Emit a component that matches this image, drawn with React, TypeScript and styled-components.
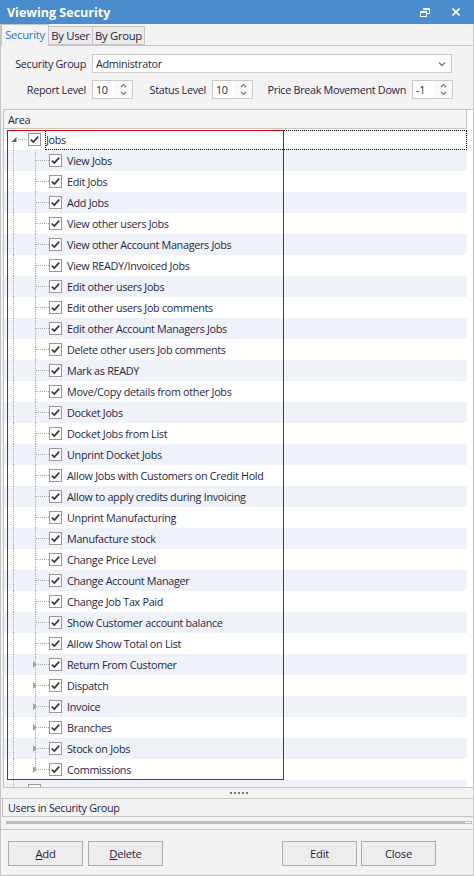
import React from 'react';
import styled, { createGlobalStyle } from 'styled-components';

const FONT = `"Open Sans", "Noto Sans", "DejaVu Sans", sans-serif`;
const TEXT = '#1f1f45';
const LINE = '#c4c4c4';

const Global = createGlobalStyle`
  html, body { margin: 0; padding: 0; background: #ffffff; }
  body { font-family: ${FONT}; }
  * { box-sizing: border-box; }
`;

const Window = styled.div`
  position: relative;
  width: 474px;
  height: 876px;
  display: flex;
  flex-direction: column;
  background: #f3f3f3;
  font-family: ${FONT};
  font-size: 10.8px;
  letter-spacing: -0.3px;
  color: ${TEXT};
  overflow: hidden;
`;

const TitleBar = styled.div`
  height: 24px;
  flex: none;
  background: #4a8ccc;
  display: flex;
  align-items: center;
  padding: 0 14px 0 7px;
`;

const Title = styled.div`
  flex: 1;
  color: #ffffff;
  font-weight: 700;
  font-size: 12.5px;
  letter-spacing: 0;
`;

const TitleButtons = styled.div`
  display: flex;
  align-items: center;
  gap: 22px;
`;

const Body = styled.div`
  flex: 1;
  display: flex;
  flex-direction: column;
  border-left: 1px solid ${LINE};
  border-right: 1px solid ${LINE};
  border-bottom: 1px solid ${LINE};
  min-height: 0;
`;

const TabStrip = styled.div`
  height: 22px;
  flex: none;
  display: flex;
  align-items: flex-end;
  border-bottom: 1px solid ${LINE};
`;

const Tab = styled.div<{ $active?: boolean; $w: number }>`
  width: ${p => p.$w}px;
  height: ${p => (p.$active ? 22 : 19)}px;
  margin-bottom: ${p => (p.$active ? -1 : 0)}px;
  margin-left: ${p => (p.$active ? 0 : -1)}px;
  border: 1px solid ${LINE};
  border-bottom: ${p => (p.$active ? 'none' : `1px solid ${LINE}`)};
  background: ${p => (p.$active ? '#f3f3f3' : '#ebebeb')};
  color: ${p => (p.$active ? '#2a78c2' : TEXT)};
  display: flex;
  align-items: center;
  justify-content: center;
  font-size: 11.3px;
  padding-bottom: ${p => (p.$active ? 2 : 0)}px;
  &:first-child { margin-left: 0; }
`;

const Form = styled.div`
  height: 63px;
  flex: none;
  display: flex;
  flex-direction: column;
  gap: 7px;
  padding-top: 8px;
`;

const FormRow = styled.div`
  display: flex;
  align-items: center;
  height: 19px;
`;

const FieldLabel = styled.div<{ $w: number }>`
  width: ${p => p.$w}px;
  flex: none;
  text-align: right;
  padding-right: 1px;
  margin-right: 5px;
  white-space: nowrap;
`;

const Combo = styled.div`
  width: 360px;
  height: 19px;
  background: #ffffff;
  border: 1px solid #c9c9c9;
  display: flex;
  align-items: center;
  padding: 0 5px 0 3px;
`;

const ComboText = styled.div`
  flex: 1;
`;

const Spin = styled.div`
  width: 41px;
  height: 19px;
  flex: none;
  background: #ffffff;
  border: 1px solid #c9c9c9;
  display: flex;
  align-items: center;
`;

const SpinText = styled.div`
  flex: 1;
  padding-left: 3px;
`;

const SpinButtons = styled.div`
  width: 18px;
  height: 100%;
  background: #f9f9f9;
  display: flex;
  align-items: center;
  justify-content: center;
`;

const Grid = styled.div`
  flex: 1;
  min-height: 0;
  margin-left: 2px;
  display: flex;
  background: #ffffff;
  border-left: 1px solid ${LINE};
  border-top: 1px solid ${LINE};
  border-bottom: 1px solid ${LINE};
`;

const GridMain = styled.div`
  flex: 1;
  min-width: 0;
  display: flex;
  flex-direction: column;
`;

const GridSideStrip = styled.div`
  width: 6px;
  flex: none;
  background: #ffffff;
`;

const GridHeader = styled.div`
  height: 19px;
  flex: none;
  background: #f4f4f4;
  border-bottom: 1px solid #c8c8c8;
  border-right: 1px solid #c8c8c8;
  display: flex;
  align-items: center;
  padding-left: 4px;
`;

const Viewport = styled.div`
  flex: 1;
  min-height: 0;
  overflow: hidden;
`;

const Row = styled.div<{ $alt: boolean }>`
  height: 21px;
  display: flex;
  align-items: center;
  background: ${p => (p.$alt ? '#eff3f9' : '#ffffff')};
`;

const Check = styled.div`
  width: 13px;
  height: 13px;
  flex: none;
  border: 1px solid #999999;
  background: #ffffff;
  display: flex;
  align-items: center;
  justify-content: center;
`;

const NodeLabel = styled.div<{ $focus?: boolean }>`
  flex: 1;
  height: 20px;
  margin-left: 4px;
  display: flex;
  align-items: center;
  border: 1px ${p => (p.$focus ? 'dotted #000000' : 'solid transparent')};
  white-space: nowrap;
`;

const Splitter = styled.div`
  height: 11px;
  flex: none;
  border-bottom: 1px solid ${LINE};
  display: flex;
  align-items: center;
  justify-content: center;
  gap: 2px;
  padding-left: 4px;
`;

const Dot = styled.span`
  width: 2px;
  height: 2px;
  background: #767676;
`;

const UsersHeader = styled.div`
  height: 18px;
  flex: none;
  margin-left: 1px;
  border-left: 1px solid ${LINE};
  border-bottom: 1px solid ${LINE};
  display: flex;
  align-items: center;
  padding-left: 5px;
`;

const BarZone = styled.div`
  height: 13px;
  flex: none;
  border-bottom: 1px solid ${LINE};
  padding: 4px 1px 0 5px;
`;

const Bar = styled.div`
  height: 3px;
  background: #bdbdbd;
  display: flex;
  justify-content: flex-end;
`;

const BarThumb = styled.div`
  width: 8px;
  height: 3px;
  background: #ffffff;
  border: 1px solid #bdbdbd;
`;

const ButtonBar = styled.div`
  height: 45px;
  flex: none;
  display: flex;
  align-items: flex-start;
  padding: 11px 0 0 7px;
`;

const Button = styled.div<{ $gap?: number }>`
  width: 75px;
  height: 25px;
  margin-left: ${p => p.$gap ?? 0}px;
  background: #ededed;
  border: 1px solid #adadad;
  display: flex;
  align-items: center;
  justify-content: center;
  color: ${TEXT};
  font-size: 11.3px;
`;

const Underline = styled.span`
  text-decoration: underline;
`;

const Annotation = styled.div`
  position: absolute;
  left: 7px;
  top: 130px;
  width: 277px;
  height: 650px;
  border: 1px solid #e00000;
  pointer-events: none;
`;

type Node = {
  label: string;
  level: 0 | 1;
  expander?: 'open' | 'closed';
  last?: boolean;
  focus?: boolean;
};

const children = [
  'View Jobs',
  'Edit Jobs',
  'Add Jobs',
  'View other users Jobs',
  'View other Account Managers Jobs',
  'View READY/Invoiced Jobs',
  'Edit other users Jobs',
  'Edit other users Job comments',
  'Edit other Account Managers Jobs',
  'Delete other users Job comments',
  'Mark as READY',
  'Move/Copy details from other Jobs',
  'Docket Jobs',
  'Docket Jobs from List',
  'Unprint Docket Jobs',
  'Allow Jobs with Customers on Credit Hold',
  'Allow to apply credits during Invoicing',
  'Unprint Manufacturing',
  'Manufacture stock',
  'Change Price Level',
  'Change Account Manager',
  'Change Job Tax Paid',
  'Show Customer account balance',
  'Allow Show Total on List',
];
const groups = ['Return From Customer', 'Dispatch', 'Invoice', 'Branches', 'Stock on Jobs', 'Commissions'];

const nodes: Node[] = [
  { label: 'Jobs', level: 0, expander: 'open', focus: true },
  ...children.map(l => ({ label: l, level: 1 as const })),
  ...groups.map((l, i) => ({ label: l, level: 1 as const, expander: 'closed' as const, last: i === groups.length - 1 })),
  { label: '', level: 0, expander: 'closed', last: true },
];

const dot = {
  stroke: '#a8a8a8',
  strokeWidth: 1,
  strokeDasharray: '1 1',
  shapeRendering: 'crispEdges' as const,
};

function TreeLines({ node }: { node: Node }) {
  if (node.level === 0) {
    const open = node.expander === 'open' && !node.last;
    return (
      <svg width={24} height={21} style={{ flex: 'none' }}>
        {open ? (
          <line x1={9.5} y1={14} x2={9.5} y2={21} {...dot} />
        ) : (
          <line x1={9.5} y1={0} x2={9.5} y2={10.5} {...dot} />
        )}
        <line x1={14} y1={10.5} x2={24} y2={10.5} {...dot} />
        {open && <polygon points="12.5,8 12.5,13 7.5,13" fill="#5a5a5a" />}
      </svg>
    );
  }
  return (
    <svg width={45} height={21} style={{ flex: 'none' }}>
      <line x1={9.5} y1={0} x2={9.5} y2={21} {...dot} />
      <line x1={31.5} y1={0} x2={31.5} y2={node.last ? 10.5 : 21} {...dot} />
      <line x1={node.expander ? 34 : 32} y1={10.5} x2={45} y2={10.5} {...dot} />
      {node.expander === 'closed' && <polygon points="29,7 33,10.5 29,14" fill="#a3a3a3" />}
    </svg>
  );
}

function CheckMark() {
  return (
    <svg width={11} height={11} viewBox="0 0 11 11">
      <path d="M1.8 5.6 L4.3 8.1 L9.2 2.6" stroke="#333333" strokeWidth={1.6} fill="none" />
    </svg>
  );
}

function SpinBox({ value }: { value: string }) {
  return (
    <Spin>
      <SpinText>{value}</SpinText>
      <SpinButtons>
        <svg width={7} height={13} viewBox="0 0 7 13">
          <path d="M1 4 L3.5 1.5 L6 4" stroke="#7a7a7a" strokeWidth={1.2} fill="none" />
          <path d="M1 9 L3.5 11.5 L6 9" stroke="#7a7a7a" strokeWidth={1.2} fill="none" />
        </svg>
      </SpinButtons>
    </Spin>
  );
}

export default function App() {
  return (
    <>
      <Global />
      <Window>
        <TitleBar>
          <Title>Viewing Security</Title>
          <TitleButtons>
            <svg width={10} height={9} viewBox="0 0 10 9">
              <path d="M3.5 2 V0.5 H9.5 V5.5 H7" stroke="#ffffff" strokeWidth={1} fill="none" />
              <rect x={0.5} y={3.5} width={6} height={5} stroke="#ffffff" strokeWidth={1} fill="none" />
              <rect x={0.5} y={3} width={6} height={2} fill="#ffffff" />
              <rect x={3.5} y={0} width={6} height={2} fill="#ffffff" />
            </svg>
            <svg width={8} height={8} viewBox="0 0 8 8">
              <path d="M0.5 0.5 L7.5 7.5 M7.5 0.5 L0.5 7.5" stroke="#ffffff" strokeWidth={1.6} />
            </svg>
          </TitleButtons>
        </TitleBar>
        <Body>
          <TabStrip>
            <Tab $active $w={48}>Security</Tab>
            <Tab $w={45}>By User</Tab>
            <Tab $w={53}>By Group</Tab>
          </TabStrip>
          <Form>
            <FormRow>
              <FieldLabel $w={86}>Security Group</FieldLabel>
              <Combo>
                <ComboText>Administrator</ComboText>
                <svg width={8} height={6} viewBox="0 0 8 6">
                  <path d="M1 1.5 L4 4.5 L7 1.5" stroke="#7a7a7a" strokeWidth={1.3} fill="none" />
                </svg>
              </Combo>
            </FormRow>
            <FormRow>
              <FieldLabel $w={86}>Report Level</FieldLabel>
              <SpinBox value="10" />
              <FieldLabel $w={74}>Status Level</FieldLabel>
              <SpinBox value="10" />
              <FieldLabel $w={154}>Price Break Movement Down</FieldLabel>
              <SpinBox value="-1" />
            </FormRow>
          </Form>
          <Grid>
            <GridMain>
              <GridHeader>Area</GridHeader>
              <Viewport>
                {nodes.map((n, i) => (
                  <Row key={i} $alt={i % 2 === 1}>
                    <TreeLines node={n} />
                    <Check>
                      <CheckMark />
                    </Check>
                    <NodeLabel $focus={n.focus}>{n.label}</NodeLabel>
                  </Row>
                ))}
              </Viewport>
            </GridMain>
            <GridSideStrip />
          </Grid>
          <Splitter>
            <Dot />
            <Dot />
            <Dot />
            <Dot />
            <Dot />
          </Splitter>
          <UsersHeader>Users in Security Group</UsersHeader>
          <BarZone>
            <Bar>
              <BarThumb />
            </Bar>
          </BarZone>
          <ButtonBar>
            <Button>
              <Underline>A</Underline>dd
            </Button>
            <Button $gap={5}>
              <Underline>D</Underline>elete
            </Button>
            <Button $gap={119}>Edit</Button>
            <Button $gap={4}>Close</Button>
          </ButtonBar>
        </Body>
        <Annotation />
      </Window>
    </>
  );
}
